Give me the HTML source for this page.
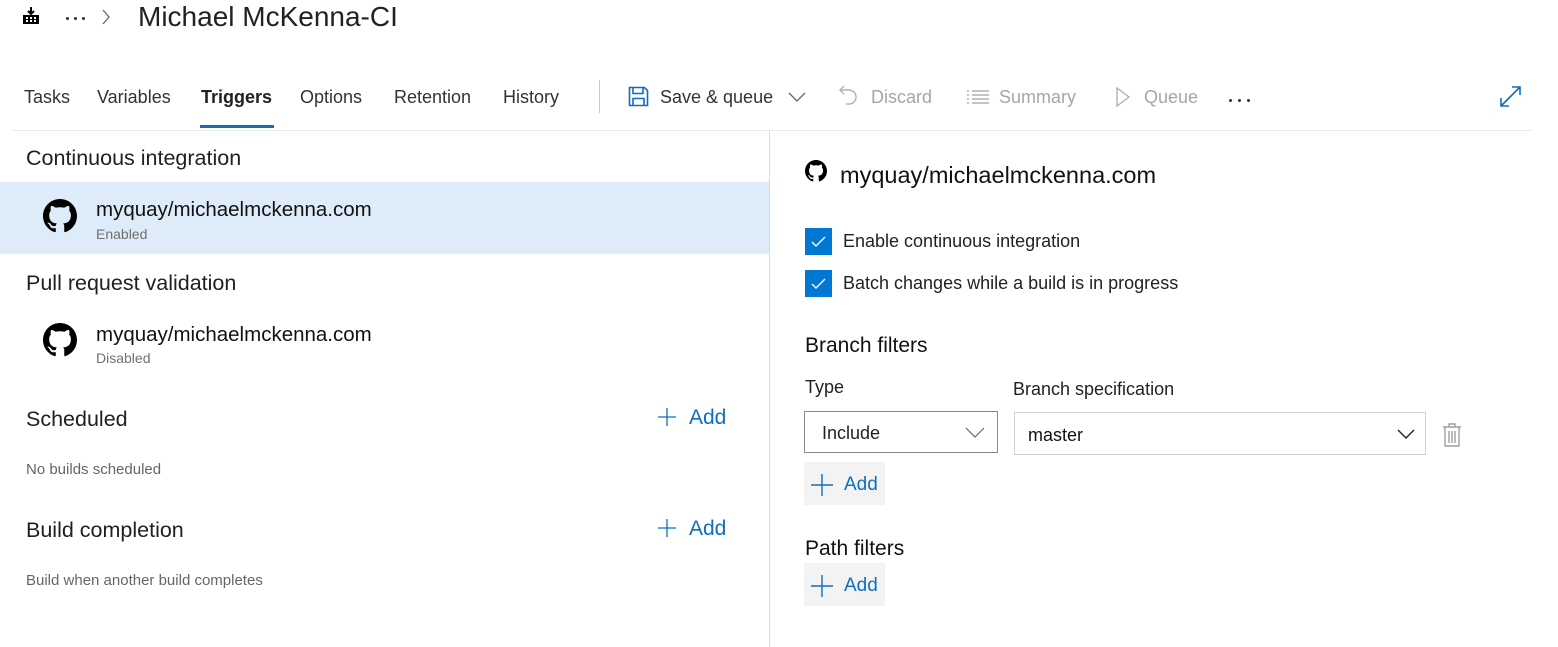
<!DOCTYPE html>
<html><head><meta charset="utf-8"><style>
body{margin:0;width:1558px;height:647px;background:#fff;font-family:"Liberation Sans",sans-serif;color:#212121;position:relative;overflow:hidden}
.a{position:absolute;white-space:nowrap}
.t{font-size:18px;line-height:24px;top:85px;color:#333}
.g{color:#a6a6a6}
.h{font-size:21.5px;line-height:26px}
.n{font-size:20.5px;line-height:24px;color:#111}
.s{font-size:14px;line-height:18px;color:#707070}
.s2{font-size:15px;line-height:18px;color:#666}
.blue{color:#106ebe}
.lbl{font-size:18px;line-height:22px;color:#222}
.cb{position:absolute;width:27px;height:27px;background:#0078d4}
.btn{position:absolute;background:#f3f3f3;width:81px;height:43px}
.dot{position:absolute;width:3px;height:3px;border-radius:2px;background:#333}
</style></head><body>
<svg class="a" style="left:22px;top:6px" width="18" height="20" viewBox="0 0 18 20"><path d="M9 1v7M6 5l3 3 3-3" stroke="#000" stroke-width="2" fill="none"/><rect x="1" y="9" width="16" height="9" fill="#000"/><rect x="4" y="11" width="2" height="2" fill="#fff"/><rect x="8" y="11" width="2" height="2" fill="#fff"/><rect x="12" y="11" width="2" height="2" fill="#fff"/><rect x="4" y="14" width="2" height="2" fill="#fff"/><rect x="8" y="14" width="2" height="2" fill="#fff"/><rect x="12" y="14" width="2" height="2" fill="#fff"/></svg>
<div class="dot" style="left:66px;top:17px"></div><div class="dot" style="left:74px;top:17px"></div><div class="dot" style="left:82px;top:17px"></div>
<svg class="a" style="left:101px;top:9px" width="10" height="16"><path d="M2 1l6 7-6 7" stroke="#666" stroke-width="1.3" fill="none"/></svg>
<div class="a" style="left:138px;top:0;font-size:28px;line-height:34px;color:#222">Michael McKenna-CI</div>

<div class="a t" style="left:24px">Tasks</div>
<div class="a t" style="left:97px">Variables</div>
<div class="a t" style="left:201px;font-weight:bold;color:#222">Triggers</div>
<div class="a" style="left:200px;top:125px;width:74px;height:3px;background:#106ebe"></div>
<div class="a t" style="left:300px">Options</div>
<div class="a t" style="left:394px">Retention</div>
<div class="a t" style="left:503px">History</div>
<div class="a" style="left:599px;top:80px;width:1px;height:33px;background:#c8c8c8"></div>
<svg class="a" style="left:628px;top:86px" width="21" height="21" viewBox="0 0 21 21"><path d="M1.5 1.5h15l3 3v15h-18z" stroke="#106ebe" stroke-width="1.6" fill="none"/><path d="M5 1.5v6h10v-6M5 19.5v-7h11v7" stroke="#106ebe" stroke-width="1.6" fill="none"/></svg>
<div class="a t" style="left:660px">Save &amp; queue</div>
<svg class="a" style="left:788px;top:91px" width="18" height="12"><path d="M1 2l8 8 8-8" stroke="#666" stroke-width="1.3" fill="none"/></svg>
<svg class="a" style="left:838px;top:84px" width="22" height="26"><path d="M6 2L2 6l4 4M2 6h9a7 7 0 0 1 0 14H8" stroke="#b0b0b0" stroke-width="1.4" fill="none"/></svg>
<div class="a t g" style="left:871px">Discard</div>
<svg class="a" style="left:966px;top:89px" width="24" height="16"><path d="M1 2h2M1 6h2M1 10h2M1 14h2M6 2h17M6 6h17M6 10h17M6 14h17" stroke="#b0b0b0" stroke-width="1.4"/></svg>
<div class="a t g" style="left:999px">Summary</div>
<svg class="a" style="left:1115px;top:86px" width="16" height="22"><path d="M2 2l12 9-12 9z" stroke="#b0b0b0" stroke-width="1.4" fill="none"/></svg>
<div class="a t g" style="left:1144px">Queue</div>
<div class="dot" style="left:1229px;top:99px"></div><div class="dot" style="left:1238px;top:99px"></div><div class="dot" style="left:1247px;top:99px"></div>
<svg class="a" style="left:1499px;top:85px" width="23" height="23"><path d="M2 21L21 2M13 2h8v8M2 13v8h8" stroke="#106ebe" stroke-width="1.6" fill="none"/></svg>
<div class="a" style="left:12px;top:130px;width:1520px;height:1px;background:#eaeaea"></div>
<div class="a" style="left:769px;top:131px;width:1px;height:516px;background:#dadada"></div>

<div class="a h" style="left:26px;top:145px">Continuous integration</div>
<div class="a" style="left:0;top:182px;width:769px;height:72px;background:#deecf9"></div>
<svg class="a" style="left:43px;top:199px" width="34" height="34" viewBox="0 0 16 16"><path fill="#000" d="M8 0C3.58 0 0 3.58 0 8c0 3.54 2.29 6.53 5.47 7.590.4.07.55-.17.55-.38 0-.19-.01-.82-.01-1.49-2.01.37-2.53-.49-2.69-.94-.09-.23-.48-.94-.82-1.13-.28-.15-.68-.52-.01-.53.63-.01 1.08.58 1.23.82.72 1.21 1.87.87 2.33.66.07-.52.28-.87.51-1.07-1.78-.2-3.64-.89-3.64-3.95 0-.87.31-1.59.82-2.15-.08-.2-.36-1.02.08-2.12 0 0 .67-.21 2.2.82.64-.18 1.32-.27 2-.27.68 0 1.36.09 2 .27 1.53-1.04 2.2-.82 2.2-.82.44 1.1.16 1.92.08 2.12.51.56.82 1.27.82 2.15 0 3.07-1.87 3.75-3.65 3.95.29.25.54.73.54 1.48 0 1.07-.01 1.93-.01 2.2 0 .21.15.46.55.38A8.013 8.013 0 0016 8c0-4.42-3.58-8-8-8z"/></svg>
<div class="a n" style="left:96px;top:198px">myquay/michaelmckenna.com</div>
<div class="a s" style="left:96px;top:225px">Enabled</div>
<div class="a h" style="left:26px;top:270px">Pull request validation</div>
<svg class="a" style="left:43px;top:323px" width="34" height="34" viewBox="0 0 16 16"><path fill="#000" d="M8 0C3.58 0 0 3.58 0 8c0 3.54 2.29 6.53 5.47 7.59.4.07.55-.17.55-.38 0-.19-.01-.82-.01-1.49-2.01.37-2.53-.49-2.69-.94-.09-.23-.48-.94-.82-1.13-.28-.15-.68-.52-.01-.53.63-.01 1.08.58 1.23.82.72 1.21 1.87.87 2.33.66.07-.52.28-.87.51-1.07-1.78-.2-3.64-.89-3.64-3.95 0-.87.31-1.59.82-2.15-.08-.2-.36-1.02.08-2.12 0 0 .67-.21 2.2.82.64-.18 1.32-.27 2-.27.68 0 1.36.09 2 .27 1.53-1.04 2.2-.82 2.2-.82.44 1.1.16 1.92.08 2.12.51.56.82 1.27.82 2.15 0 3.07-1.87 3.75-3.65 3.95.29.25.54.73.54 1.48 0 1.07-.01 1.93-.01 2.2 0 .21.15.46.55.38A8.013 8.013 0 0016 8c0-4.42-3.58-8-8-8z"/></svg>
<div class="a n" style="left:96px;top:323px">myquay/michaelmckenna.com</div>
<div class="a s" style="left:96px;top:349px">Disabled</div>
<div class="a h" style="left:26px;top:406px">Scheduled</div>
<svg class="a" style="left:658px;top:408px" width="18" height="18"><path d="M9 0v18M0 9h18" stroke="#106ebe" stroke-width="1.3"/></svg>
<div class="a blue" style="left:689px;top:405px;font-size:21px;line-height:26px">Add</div>
<div class="a s2" style="left:26px;top:461px">No builds scheduled</div>
<div class="a h" style="left:26px;top:517px">Build completion</div>
<svg class="a" style="left:658px;top:519px" width="18" height="18"><path d="M9 0v18M0 9h18" stroke="#106ebe" stroke-width="1.3"/></svg>
<div class="a blue" style="left:689px;top:516px;font-size:21px;line-height:26px">Add</div>
<div class="a s2" style="left:26px;top:572px">Build when another build completes</div>

<svg class="a" style="left:805px;top:160px" width="22" height="22" viewBox="0 0 16 16"><path fill="#000" d="M8 0C3.58 0 0 3.58 0 8c0 3.54 2.29 6.53 5.47 7.59.4.07.55-.17.55-.38 0-.19-.01-.82-.01-1.49-2.01.37-2.53-.49-2.69-.94-.09-.23-.48-.94-.82-1.13-.28-.15-.68-.52-.01-.53.63-.01 1.08.58 1.23.82.72 1.21 1.87.87 2.33.66.07-.52.28-.87.51-1.07-1.78-.2-3.64-.89-3.64-3.95 0-.87.31-1.59.82-2.15-.08-.2-.36-1.02.08-2.12 0 0 .67-.21 2.2.82.64-.18 1.32-.27 2-.27.68 0 1.36.09 2 .27 1.53-1.04 2.2-.82 2.2-.82.44 1.1.16 1.92.08 2.12.51.56.82 1.27.82 2.15 0 3.07-1.87 3.75-3.65 3.95.29.25.54.73.54 1.48 0 1.07-.01 1.93-.01 2.2 0 .21.15.46.55.38A8.013 8.013 0 0016 8c0-4.42-3.58-8-8-8z"/></svg>
<div class="a" style="left:840px;top:161px;font-size:23.5px;line-height:28px;color:#111">myquay/michaelmckenna.com</div>
<div class="cb" style="left:805px;top:228px"><svg width="27" height="27"><path d="M7 14l4 4 9-9" stroke="#fff" stroke-width="1.4" fill="none"/></svg></div>
<div class="a lbl" style="left:843px;top:230px">Enable continuous integration</div>
<div class="cb" style="left:805px;top:270px"><svg width="27" height="27"><path d="M7 14l4 4 9-9" stroke="#fff" stroke-width="1.4" fill="none"/></svg></div>
<div class="a lbl" style="left:843px;top:272px">Batch changes while a build is in progress</div>
<div class="a h" style="left:805px;top:333px;color:#111;font-size:21px">Branch filters</div>
<div class="a lbl" style="left:805px;top:376px">Type</div>
<div class="a lbl" style="left:1013px;top:378px">Branch specification</div>
<div class="a" style="left:804px;top:411px;width:192px;height:40px;border:1px solid #8a8a8a"></div>
<div class="a lbl" style="left:822px;top:422px">Include</div>
<svg class="a" style="left:965px;top:427px" width="20" height="11"><path d="M1 1l9 9 9-9" stroke="#666" stroke-width="1.2" fill="none"/></svg>
<div class="a" style="left:1014px;top:412px;width:410px;height:41px;border:1px solid #d0d0d0"></div>
<div class="a lbl" style="left:1028px;top:424px;color:#111">master</div>
<svg class="a" style="left:1397px;top:429px" width="18" height="11"><path d="M1 1l8 8 8-8" stroke="#222" stroke-width="1.4" fill="none"/></svg>
<svg class="a" style="left:1442px;top:423px" width="20" height="24"><path d="M1 4h18M7 4V1h6v3M3 4v19h14V4M7 8v12M10 8v12M13 8v12" stroke="#a0a0a0" stroke-width="1.4" fill="none"/></svg>
<div class="btn" style="left:804px;top:462px"></div>
<svg class="a" style="left:811px;top:474px" width="22" height="22"><path d="M11 0v22M0 11h22" stroke="#106ebe" stroke-width="1.4"/></svg>
<div class="a blue" style="left:844px;top:473px;font-size:19px;line-height:24px">Add</div>
<div class="a h" style="left:805px;top:536px;color:#111;font-size:21px">Path filters</div>
<div class="btn" style="left:804px;top:563px"></div>
<svg class="a" style="left:811px;top:575px" width="22" height="22"><path d="M11 0v22M0 11h22" stroke="#106ebe" stroke-width="1.4"/></svg>
<div class="a blue" style="left:844px;top:574px;font-size:19px;line-height:24px">Add</div>
</body></html>
